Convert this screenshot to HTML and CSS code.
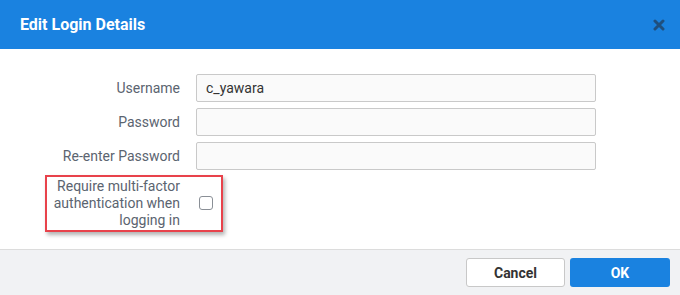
FILE: index.html
```html
<!DOCTYPE html>
<html>
<head>
<meta charset="utf-8">
<link rel="stylesheet" href="styles.css">
</head>
<body>
<div class="dialog">
  <div class="header">
    <span class="title">Edit Login Details</span>
    <svg class="close" width="12" height="12" viewBox="0 0 12 12"><path d="M2 2 L10 10 M10 2 L2 10" stroke="#1f4f7e" stroke-width="3" stroke-linecap="round"/></svg>
  </div>
  <div class="body">
    <div class="form">
      <label class="lbl">Username</label>
      <div class="input">c_yawara</div>
      <label class="lbl">Password</label>
      <div class="input"></div>
      <label class="lbl">Re-enter Password</label>
      <div class="input"></div>
      <label class="lbl multi">Require multi-factor<br>authentication when<br>logging in</label>
      <div class="cbcell"><span class="cb"></span></div>
    </div>
    <div class="highlight"></div>
  </div>
  <div class="footer">
    <button class="btn cancel">Cancel</button>
    <button class="btn ok">OK</button>
  </div>
</div>
</body>
</html>
```
FILE: styles.css
```css
html, body { margin: 0; padding: 0; background: #fff; }
body { font-family: Roboto, "Liberation Sans", sans-serif; width: 680px; height: 295px; overflow: hidden; }
.dialog { width: 680px; height: 295px; display: flex; flex-direction: column; }
.header {
  height: 49px; background: #1a82e0; border-bottom: 1px solid #fff;
  display: flex; align-items: center; justify-content: space-between;
  padding: 0 15px 0 20px;
}
.title { color: #fff; font-weight: 700; font-size: 16px; }
.close { display: block; }
.body { flex: 1; position: relative; padding-top: 24px; }
.form {
  display: grid; grid-template-columns: 180px 400px; column-gap: 16px; row-gap: 6px;
  align-items: center;
}
.lbl { text-align: right; color: #5b6470; font-size: 14px; }
.input {
  height: 26px; border: 1px solid #c9c9c9; border-radius: 2px; background: #fafafa;
  box-sizing: content-box; font-size: 14px; color: #333; line-height: 26px; padding: 0 8px 0 9px;
  width: 381px;
}
.multi { line-height: 17px; margin-top: 2px; }
.cbcell { display: flex; align-items: center; height: 100%; }
.cb {
  width: 12px; height: 12px; border: 1px solid #8a8f96; border-radius: 3px; background: #fff;
  margin-left: 3px;
}
.highlight {
  position: absolute; left: 45px; top: 125px; width: 174px; height: 53px;
  border: 2px solid #e8424b; box-shadow: 2px 3px 4px rgba(0,0,0,0.3);
}
.footer {
  height: 46px; box-sizing: border-box; background: #f1f2f4; border-top: 1px solid #dcdcdc;
  display: flex; justify-content: flex-end; align-items: center; gap: 5px; padding: 0 10px 0 0;
}
.btn {
  height: 29px; border-radius: 3px; font-family: inherit; font-weight: 700; font-size: 14px;
  padding: 0; margin: 0;
}
.cancel { width: 99px; background: #fff; border: 1px solid #c8c8c8; color: #333; }
.ok { width: 100px; background: #1a82e0; border: none; color: #fff; }
```
